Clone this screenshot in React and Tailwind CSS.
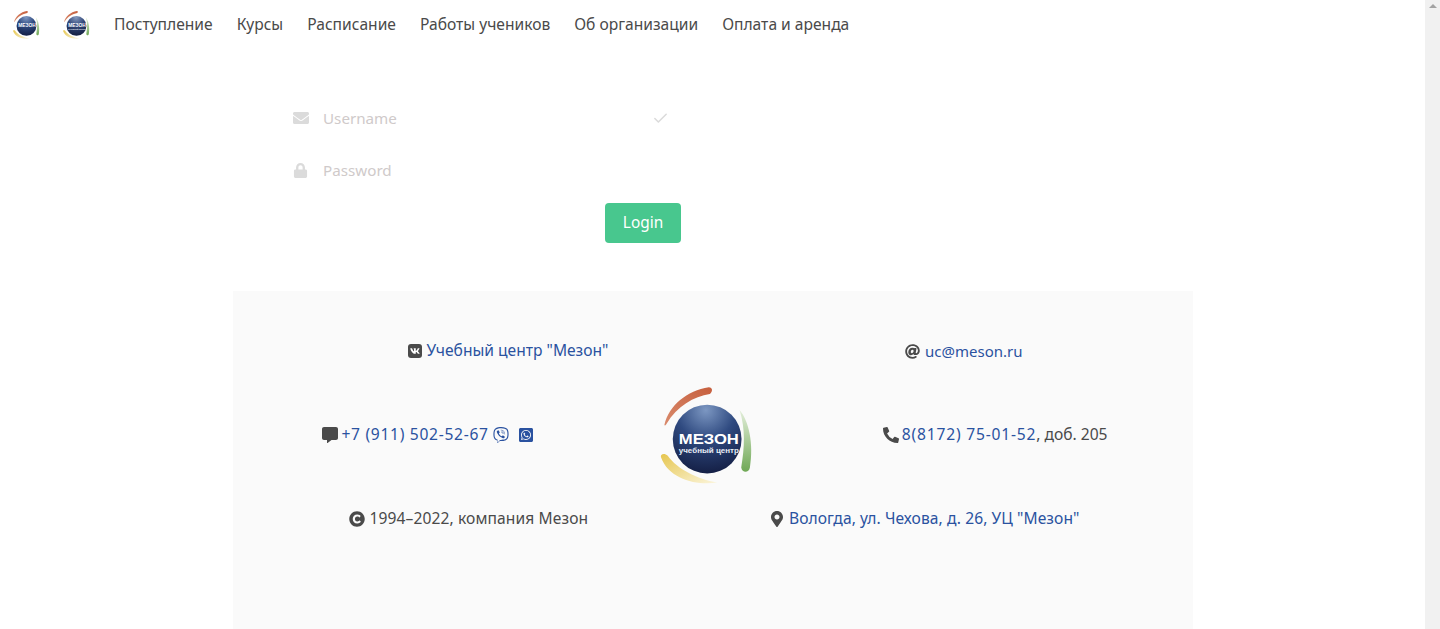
import React from 'react'
import { Check } from 'lucide-react'
import { FaVk, FaViber, FaWhatsappSquare, FaPhoneAlt, FaCopyright, FaAt, FaMapMarkerAlt, FaCommentAlt, FaEnvelope, FaLock } from 'react-icons/fa'

const fontStack = { fontFamily: '"Noto Sans", "Open Sans", sans-serif' }

// логотип рисуем в svg, картинки нет
function MesonLogo({ width, prefix, dark, sub }) {
  return (
    <svg width={width} height={width * 1.05} viewBox="50 30 290 305" className="block shrink-0">
      <defs>
        <radialGradient id={`${prefix}-ball`} cx="48%" cy="8%" r="95%">
          <stop offset="0%" stopColor={dark ? '#8398bd' : '#7c97c2'} />
          <stop offset="45%" stopColor={dark ? '#33487a' : '#2f4a80'} />
          <stop offset="100%" stopColor={dark ? '#121c3c' : '#131d42'} />
        </radialGradient>
        <linearGradient id={`${prefix}-red`} x1="0" y1="1" x2="1" y2="0">
          <stop offset="0%" stopColor="#d98a6c" />
          <stop offset="100%" stopColor="#c65f3e" />
        </linearGradient>
        <linearGradient id={`${prefix}-green`} x1="0" y1="0" x2="0" y2="1">
          <stop offset="0%" stopColor="#e3eeda" />
          <stop offset="100%" stopColor="#6fa855" />
        </linearGradient>
        <linearGradient id={`${prefix}-yellow`} x1="0" y1="0" x2="1" y2="1">
          <stop offset="0%" stopColor="#e6c64f" />
          <stop offset="100%" stopColor="#fbf5dc" />
        </linearGradient>
      </defs>
      <path d="M72 152 C85 95 140 50 205 40 C216 40 218 52 208 60 C160 68 110 95 78 150 C75 155 72 156 72 152 Z" fill={`url(#${prefix}-red)`} />
      <path d="M297 108 C325 140 340 210 328 280 C325 297 305 298 302 280 C312 220 315 165 297 108 Z" fill={`url(#${prefix}-green)`} />
      <path d="M62 250 C58 240 72 235 82 245 C110 285 170 315 230 325 C170 335 85 315 62 250 Z" fill={`url(#${prefix}-yellow)`} />
      <circle cx="200" cy="195" r="103" fill={`url(#${prefix}-ball)`} />
      <text x="205" y="209" textAnchor="middle" textLength="180" lengthAdjust="spacingAndGlyphs" fill="#fff" fontSize="46" fontWeight="700" fontFamily="Liberation Sans, sans-serif">МЕЗОН</text>
      {sub && (
        <text x="205" y="236" textAnchor="middle" textLength="180" lengthAdjust="spacingAndGlyphs" fill="#e8edf5" fontSize="20" fontWeight="700" fontFamily="Liberation Sans, sans-serif">учебный центр</text>
      )}
    </svg>
  )
}

function Link({ children, className = '' }) {
  return <a href="#" className={`text-[#2a52a0] ${className}`}>{children}</a>
}

function Field({ icon, placeholder, right }) {
  return (
    <div className="flex items-center h-10 w-[390px] text-[#dbdbdb]">
      <div className="w-[30px] flex justify-start">{icon}</div>
      <span className="text-[#cfcaca] text-[15.2px]">{placeholder}</span>
      <div className="ml-auto mr-[14px] flex">{right}</div>
    </div>
  )
}

function App() {
  const navItems = ['Поступление', 'Курсы', 'Расписание', 'Работы учеников', 'Об организации', 'Оплата и аренда']

  return (
    <div className="flex h-[629px] overflow-hidden bg-white text-[#4a4a4a] text-[15.6px]" style={fontStack}>
      <div className="flex-1 min-w-0 flex flex-col">
        <nav className="flex items-center h-[50px] pl-3 shrink-0">
          <MesonLogo width={28} prefix="a" />
          <div className="ml-[22px]"><MesonLogo width={28} prefix="b" dark sub /></div>
          <div className="flex items-center gap-6 ml-6">
            {navItems.map((item) => (
              <a key={item} href="#" className="whitespace-nowrap">{item}</a>
            ))}
          </div>
        </nav>

        <form className="ml-[293px] mt-[48px] flex flex-col gap-3 w-[390px] shrink-0">
          <Field icon={<FaEnvelope size={16} />} placeholder="Username" right={<Check size={17} strokeWidth={2.2} />} />
          <Field icon={<FaLock size={15} />} placeholder="Password" />
        </form>
        <div className="ml-[605px] mt-[13px] shrink-0">
          <button type="button" className="w-[76px] h-10 rounded bg-[#48c78e] text-white text-[15.4px]">Login</button>
        </div>

        <footer className="mt-12 mx-auto w-[960px] flex-1 bg-[#fafafa] pt-[18px] flex flex-col">
          <div className="flex h-[84px] items-center">
            <span className="ml-[175px] flex items-center gap-[5px] whitespace-nowrap">
              <FaVk className="bg-[#4a4a4a] text-white rounded-[3px] p-[2px]" size={14} />
              <Link>Учебный центр "Мезон"</Link>
            </span>
            <span className="ml-auto mr-[170px] flex items-center gap-[5px] whitespace-nowrap text-[15px]">
              <FaAt size={15} />
              <Link>uc@meson.ru</Link>
            </span>
          </div>

          <div className="flex h-[84px] items-center">
            <span className="ml-[89px] flex items-center gap-1 whitespace-nowrap">
              <FaCommentAlt size={16} />
              <Link className="tracking-[0.7px]">+7 (911) 502-52-67</Link>
              <FaViber size={16} className="text-[#2a52a0]" />
              <FaWhatsappSquare size={16} className="text-[#2a52a0] ml-[5px]" />
            </span>
            <div className="ml-[123px]"><MesonLogo width={97} prefix="c" sub /></div>
            <span className="ml-auto mr-[85px] flex items-center gap-[3px] whitespace-nowrap">
              <FaPhoneAlt size={16} />
              <span><Link className="tracking-[0.8px]">8(8172) 75-01-52</Link>, доб. 205</span>
            </span>
          </div>

          <div className="flex h-[84px] items-center">
            <span className="ml-[116px] flex items-center gap-[5px] whitespace-nowrap tracking-[0.1px]">
              <FaCopyright size={16} />
              1994–2022, компания Мезон
            </span>
            <span className="ml-auto mr-[113px] flex items-center gap-[4px] whitespace-nowrap tracking-[0.08px]">
              <FaMapMarkerAlt size={16} />
              <Link>Вологда, ул. Чехова, д. 26, УЦ "Мезон"</Link>
            </span>
          </div>
        </footer>
      </div>

      {/* полоса прокрутки */}
      <div className="w-[15px] shrink-0 bg-[#f1f1f1] flex flex-col items-center pt-1">
        <div className="w-0 h-0 border-l-4 border-r-4 border-b-4 border-l-transparent border-r-transparent border-b-[#a3a3a3]" />
      </div>
    </div>
  )
}

export default App
